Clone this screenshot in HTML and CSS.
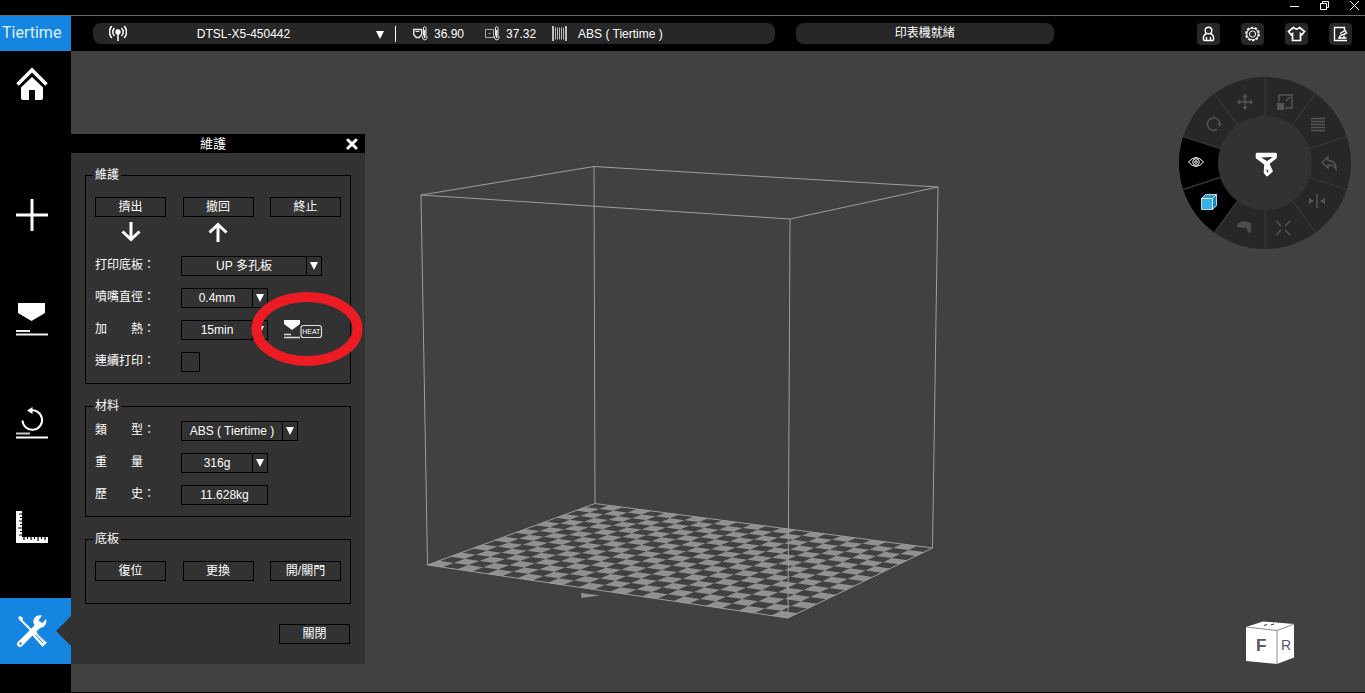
FILE: index.html
```html
<!DOCTYPE html>
<html lang="zh-Hant">
<head>
  <meta charset="UTF-8">
  <meta name="viewport" content="width=device-width,initial-scale=1.0">
  <title>Tiertime</title>
  <link rel="stylesheet" href="styles.css">
</head>
<body>
  <!-- window buttons -->
  <div class="titlebar">
    <button type="button" aria-label="最小化"><svg width="11" height="11" viewBox="0 0 11 11"><path d="M1 6.500h9"/></svg></button>
    <button type="button" aria-label="還原"><svg width="11" height="11" viewBox="0 0 11 11"><path d="M1.500 3.500h6v6h-6zM3.500 3.500v-2h6v6h-2"/></svg></button>
    <button type="button" aria-label="關閉視窗"><svg width="11" height="11" viewBox="0 0 11 11"><path d="M1 1l9 9M10 1l-9 9"/></svg></button>
  </div>

  <header class="header">
    <a class="logo" href="#">Tiertime</a>
    <div class="pill status">
      <svg class="signal" width="18" height="17" viewBox="0 0 18 17">
        <circle cx="9" cy="7" r="2.700" fill="#fff"/>
        <path d="M9 7v9M5.500 3a5.500 5.500 0 0 0 0 8M12.500 3a5.500 5.500 0 0 1 0 8M2.800 1a9 9 0 0 0 0 12M15.200 1a9 9 0 0 1 0 12" fill="none" stroke="#fff" stroke-width="1.500"/>
      </svg>
      <div class="device">
        <select aria-label="印表機"><option>DTSL-X5-450442</option></select>
      </div>
      <span class="reading">
        <svg width="15" height="15" viewBox="0 0 15 15" fill="none" stroke="#e6e6e6">
          <path d="M.700 3.500h8v5l-2.500 3h-3l-2.500-3z" stroke-width="1.400"/><path d="M2.500 5.500h4M10.500 2a1.200 1.200 0 0 1 2.500 0v7.500a2.300 2.300 0 1 1-2.500 0z"/><path d="M11.700 4v8" stroke-width="1.500"/>
        </svg>36.90
      </span>
      <span class="reading">
        <svg width="15" height="15" viewBox="0 0 15 15" fill="none" stroke="#e6e6e6">
          <path d="M.500 3.500h8v8h-8zM3.500 7.500h2" stroke="#aaa"/><path d="M10.500 2a1.200 1.200 0 0 1 2.500 0v7.500a2.300 2.300 0 1 1-2.500 0z"/><path d="M11.700 4v8" stroke-width="1.500"/>
        </svg>37.32
      </span>
      <span class="reading material">
        <svg width="15" height="15" viewBox="0 0 15 15" stroke="#fff">
          <path d="M1 0v15M14 0v15" stroke-width="1.400"/><path d="M3.500 1.500v12M5.500 1.500v12M7.500 1.500v12M9.500 1.500v12M11.500 1.500v12" stroke="#bbb"/>
        </svg>ABS ( Tiertime )
      </span>
    </div>
    <div class="pill message">印表機就緒</div>
    <div class="tools">
      <button type="button" aria-label="帳戶"><svg width="19" height="18" viewBox="0 0 19 18"><circle cx="9.500" cy="5.500" r="3.300"/><path d="M7.500 8.500C4 10 3.800 13.500 5 15.500h9c1.200-2 1-5.500-2.500-7M7.500 12v3.500M11.500 12v3.500"/></svg></button>
      <button type="button" aria-label="設定"><svg width="19" height="18" viewBox="0 0 19 18"><circle cx="9.500" cy="9" r="6.600" stroke-width="1.500" stroke-dasharray="2.600 1.550"/><circle cx="9.500" cy="9" r="5.700" stroke-width="1"/><circle cx="9.500" cy="9" r="3.100" stroke-width="1"/></svg></button>
      <button type="button" aria-label="外觀"><svg width="19" height="18" viewBox="0 0 19 18"><path d="M6.500 2.500q3 3 6 0l5 4-2.500 3.200-1.500-1V15.500h-8V8.700l-1.500 1L1.500 6.500z" stroke-width="1.700"/></svg></button>
      <button type="button" aria-label="記錄"><svg width="19" height="18" viewBox="0 0 19 18"><path d="M13.500 6V2.500h-10v13h12.500M7 13h8.500M8.500 12.500c0-3 3-2 5.500-4M9 8.500l5-3 1.500 2.500-3 1.500M13 10.500v2.500"/></svg></button>
    </div>
  </header>

  <div class="main">
    <nav class="sidebar">
      <a class="home" href="#" aria-label="首頁">
        <svg width="32" height="34" viewBox="0 0 32 34"><path d="M1.500 17.500L16 3l14.500 14.500" fill="none" stroke="#fff" stroke-width="3.600"/><path d="M5 20.500L16 10l11 10.500V31q0 2-2 2h-6V23h-6v10H7q-2 0-2-2z" fill="#fff"/></svg>
      </a>
      <a href="#" aria-label="新增">
        <svg width="32" height="32" viewBox="0 0 32 32"><path d="M0 16h32M16 0v32" stroke="#fff" stroke-width="3"/></svg>
      </a>
      <a href="#" aria-label="打印">
        <svg width="32" height="34" viewBox="0 0 32 34"><path d="M2 1h27v10L15.500 19 2 11z" fill="#fff"/><path d="M0 29h14M0 32.500h32" stroke="#eee" stroke-width="2"/></svg>
      </a>
      <a href="#" aria-label="初始化">
        <svg width="32" height="32" viewBox="0 0 32 32"><path d="M6.500 13.500A9.800 9.800 0 1 0 14 3.500" fill="none" stroke="#fff" stroke-width="2"/><path d="M11 3.500L16.500 0v7z" fill="#fff"/><path d="M0 26.500h14" stroke="#ccc" stroke-width="2"/><path d="M0 30.500h32" stroke="#fff" stroke-width="2"/></svg>
      </a>
      <a href="#" aria-label="校準">
        <svg width="32" height="32" viewBox="0 0 32 32"><path d="M0 0h6v26h26v6H0z" fill="#fff"/><path d="M6 3H3M6 6.500H4M6 10H3M6 13.500H4M6 17H2M6 20.500H4M6 24H3M8 26v3M11.500 26v2M15 26v3M18.500 26v2M22 26v4M25.500 26v2M29 26v3" stroke="#000" stroke-width="1.200"/></svg>
      </a>
      <a class="active" href="#" aria-label="維護">
        <svg width="32" height="34" viewBox="0 0 32 34">
          <path d="M4 5l17 17" stroke="#fff" stroke-width="2"/><path d="M2 3.500L4 2l3 2-.5 2L4 6.500z" fill="#fff"/>
          <path d="M16 21l3.500-4L31 28.500 26.500 33z" fill="#fff"/><path d="M19.500 21l7.500 8M21.500 19.500l7.500 8" stroke="#1485e0"/>
          <path d="M4 30L22 12" stroke="#fff" stroke-width="6" stroke-linecap="round"/>
          <path d="M26 1.500c-5-1.500-9.500 2.500-8.500 7.500.8 4 5 6 8.500 4.500 3.500-1 5-5 4-8.500L26.500 9 22.500 6.500z" fill="#fff"/><circle cx="4.500" cy="29.500" r="1.200" fill="#1485e0"/>
        </svg>
      </a>
    </nav>

    <main class="workspace">
      <form class="panel">
        <div class="panel-title">
          <h1>維護</h1>
          <button class="close" type="button" aria-label="關閉"><svg width="12" height="12" viewBox="0 0 12 12"><path d="M2 2l8 8M10 2l-8 8" stroke="#fff" stroke-width="3" stroke-linecap="round"/></svg></button>
        </div>
        <div class="panel-body">
          <fieldset class="group">
            <legend>維護</legend>
            <div class="buttons">
              <button class="btn" type="button">擠出</button>
              <button class="btn" type="button">撤回</button>
              <button class="btn" type="button">終止</button>
            </div>
            <div class="arrows">
              <svg viewBox="0 0 20 20"><path d="M10 0v17M1.500 9.500L10 17.500 18.500 9.500"/></svg>
              <svg viewBox="0 0 20 20"><path d="M10 20V3M1.500 10.500L10 2.500 18.500 10.500"/></svg>
            </div>
            <div class="row">
              <label for="plate">打印底板：</label>
              <div class="select wide"><select id="plate"><option>UP 多孔板</option></select></div>
            </div>
            <div class="row">
              <label for="nozzle">噴嘴直徑：</label>
              <div class="select"><select id="nozzle"><option>0.4mm</option></select></div>
            </div>
            <div class="row">
              <label for="heat">加　　熱：</label>
              <div class="select"><select id="heat"><option>15min</option></select></div>
              <button class="heat" type="button" aria-label="加熱">
                <svg width="39" height="20" viewBox="0 0 39 20"><path d="M0 0h16v4l-8 6-8-6z" fill="#fff"/><path d="M0 14.500h7M0 17.500h16" stroke="#ddd" stroke-width="1.500"/><rect x="17" y="5.500" width="20.500" height="12" rx="2.500" fill="none" stroke="#ddd" stroke-width="1.200"/><text x="27.300" y="14" text-anchor="middle">HEAT</text></svg>
              </button>
            </div>
            <div class="row">
              <label for="repeat">連續打印：</label>
              <input type="checkbox" id="repeat">
            </div>
          </fieldset>

          <fieldset class="group compact">
            <legend>材料</legend>
            <div class="row">
              <label for="type">類　　型：</label>
              <div class="select medium"><select id="type"><option>ABS ( Tiertime )</option></select></div>
            </div>
            <div class="row">
              <label for="weight">重　　量</label>
              <div class="select"><select id="weight"><option>316g</option></select></div>
            </div>
            <div class="row">
              <label for="history">歷　　史：</label>
              <input class="field" type="text" id="history" value="11.628kg" readonly>
            </div>
          </fieldset>

          <fieldset class="group plate">
            <legend>底板</legend>
            <div class="buttons">
              <button class="btn" type="button">復位</button>
              <button class="btn" type="button">更換</button>
              <button class="btn" type="button">開/關門</button>
            </div>
          </fieldset>

          <div class="footer">
            <button class="btn" type="button">關閉</button>
          </div>
        </div>
        <svg class="marker" viewBox="0 0 112 74"><ellipse cx="56" cy="37" rx="50.500" ry="32" fill="none" stroke="#ed1c24" stroke-width="10"/></svg>
      </form>

      <!-- build volume -->
      <svg class="scene" viewBox="400 150 560 480">
        <path id="cells" fill="#919191"/>
        <g fill="none" stroke="#9d9d9d">
          <path d="M421 195L594 166.500 938 187 790 219z"/>
          <path d="M427.500 565L595 503.500 932.500 548 788 618z"/>
          <path d="M421 195L427.500 565M594 166.500L595 503.500M938 187L932.500 548M790 219L788 618"/>
        </g>
        <path d="M581 593L600 595.500 581.500 598z" fill="#919191"/>
      </svg>

      <!-- tool wheel -->
      <div class="wheel">
        <svg class="ring" viewBox="0 0 172 172">
          <circle cx="86" cy="86" r="66" fill="#323232" stroke="#272727" stroke-width="40"/>
          <path d="M86 86L35.450 155.580A86 86 0 0 1 4.210 59.420z" fill="#000"/>
          <path id="spokes" stroke="#353535" stroke-width="1.500"/>
          <circle cx="86" cy="86" r="47" fill="#323232"/>
        </svg>
        <button class="w-main" type="button" aria-label="工具"><svg viewBox="0 0 28 28"><path d="M5 3h18.500v3.500L16 12.500l3.500 7.500-4.500 4-2-2.500.500-8.500L5 6.500z" fill="#fff" stroke="#fff" stroke-width="2.600" stroke-linejoin="round"/><path d="M9 6.500l12-.5-6 4zM14.500 18l2 2-1.500 2z" fill="#323232" stroke="none"/></svg></button>
        <button class="w-move" type="button" aria-label="移動"><svg viewBox="0 0 16 16"><path d="M8 1v14M1 8h14M6 3l2-2 2 2M6 13l2 2 2-2M3 6L1 8l2 2M13 6l2 2-2 2"/></svg></button>
        <button class="w-scale" type="button" aria-label="縮放"><svg viewBox="0 0 16 16"><path d="M2 8V1h13v13H8M9 7l4-4"/><path d="M0 9h7v7H0z" fill="#555" stroke="none"/></svg></button>
        <button class="w-layers" type="button" aria-label="層"><svg viewBox="0 0 16 16"><path d="M1 1.500h14M1 4.500h14M1 7.500h14M1 10.500h14M1 13.500h14"/></svg></button>
        <button class="w-undo" type="button" aria-label="復原"><svg viewBox="0 0 16 16"><path d="M1 7.500L7 2v3.500c5 0 8 3 8 8.500-2-3.500-4-4-8-4V13z"/></svg></button>
        <button class="w-mirror" type="button" aria-label="鏡像"><svg viewBox="0 0 16 16"><path d="M8 1v14"/><path d="M0 5l5 3-5 3zM16 5l-5 3 5 3z" fill="#555" stroke="none"/></svg></button>
        <button class="w-fit" type="button" aria-label="置中"><svg viewBox="0 0 16 16"><path d="M1 1l5 5M15 1l-5 5M1 15l5-5M15 15l-5-5"/></svg></button>
        <button class="w-support" type="button" aria-label="支撐"><svg viewBox="0 0 16 16"><path d="M1 5q5-5 14-1v9l-3 1q-1-6-4-5l-7-1z" fill="#4d4d4d" stroke="none"/></svg></button>
        <button class="w-view" type="button" aria-label="視角"><svg viewBox="0 0 16 16" stroke="#e6f7ff" stroke-width=".8"><path d="M.500 4.500h11v11H.500z" fill="#3ab0e2"/><path d="M.500 4.500L4.500.500h11l-4 4z" fill="#279ccd"/><path d="M11.500 4.500l4-4v11l-4 4z" fill="#1689bb"/></svg></button>
        <button class="w-eye" type="button" aria-label="顯示"><svg viewBox="0 0 16 16" stroke="#fff"><path d="M.500 8q7.500-9 15 0-7.500 9-15 0z"/><circle cx="8" cy="8" r="3.300"/><circle cx="8" cy="8" r="1.300"/></svg></button>
        <button class="w-rotate" type="button" aria-label="旋轉"><svg viewBox="0 0 16 16"><path d="M11 13.500A6.300 6.300 0 1 1 14 8"/><path d="M11 7.500h5l-2.500 3z" fill="#555" stroke="none"/></svg></button>
      </div>

      <!-- view cube -->
      <svg class="cube" viewBox="0 0 50 44">
        <path d="M1 6L18 .500 49 3 32 9.500z" fill="#fff"/>
        <path d="M1 6l31 3.500V43L1 40z" fill="#fff"/>
        <path d="M32 9.500L49 3v33.500L32 43z" fill="#fff"/>
        <path d="M1 6l31 3.500L49 3M32 9.500V43" fill="none" stroke="#8d8d8d"/>
        <path d="M19 4.500l3-1M26 4l3-1" stroke="#444" stroke-width="1.300"/>
        <text class="f" x="11" y="30">F</text>
        <text class="r" x="36" y="29">R</text>
      </svg>
    </main>
  </div>

  <script>
    // checkerboard of the build plate
    const cols = 23;
    const rows = 16;
    const p0 = [427.5, 565], p1 = [788, 618], p2 = [932.5, 548], p3 = [595, 503.5];

    // unit square -> plate corners
    const dx1 = p1[0] - p2[0], dy1 = p1[1] - p2[1];
    const dx2 = p3[0] - p2[0], dy2 = p3[1] - p2[1];
    const sx = p0[0] - p1[0] + p2[0] - p3[0];
    const sy = p0[1] - p1[1] + p2[1] - p3[1];
    const det = dx1 * dy2 - dx2 * dy1;
    const g = (sx * dy2 - dx2 * sy) / det;
    const h = (dx1 * sy - sx * dy1) / det;

    function project(u, v) {
      const w = g * u + h * v + 1;
      const x = ((p1[0] - p0[0] + g * p1[0]) * u + (p3[0] - p0[0] + h * p3[0]) * v + p0[0]) / w;
      const y = ((p1[1] - p0[1] + g * p1[1]) * u + (p3[1] - p0[1] + h * p3[1]) * v + p0[1]) / w;
      return x.toFixed(2) + " " + y.toFixed(2);
    }

    let cells = "";
    for (let i = 0; i < cols; i++) {
      for (let j = 0; j < rows; j++) {
        if ((i + j) % 2) continue;
        cells += `M${project(i / cols, j / rows)}L${project((i + 1) / cols, j / rows)} ${project((i + 1) / cols, (j + 1) / rows)} ${project(i / cols, (j + 1) / rows)}z`;
      }
    }
    document.getElementById("cells").setAttribute("d", cells);

    let spokes = "";
    for (let i = 0; i < 10; i++) {
      const a = i * Math.PI / 5;
      spokes += `M86 86L${86 + 86 * Math.sin(a)} ${86 - 86 * Math.cos(a)}`;
    }
    document.getElementById("spokes").setAttribute("d", spokes);
  </script>
</body>
</html>
```
FILE: styles.css
```css
* {
  box-sizing: border-box;
}
body {
  margin: 0;
  padding-bottom: 1px;
  min-height: 100vh;
  display: flex;
  flex-direction: column;
  background: #000;
  color: #fff;
  font-family: "Liberation Sans", "Noto Sans CJK TC", sans-serif;
  font-size: 12px;
  line-height: 16px;
}
button, select, input {
  margin: 0;
  padding: 0;
  border: 0;
  border-radius: 0;
  background: none;
  color: inherit;
  font: inherit;
}
svg {
  display: block;
}

/* window title bar */
.titlebar {
  height: 16px;
  display: flex;
  justify-content: flex-end;
  gap: 19px;
  padding-right: 5px;
  border-bottom: 1px solid #6a6a6a;
}
.titlebar button {
  height: 11px;
}
.titlebar path {
  fill: none;
  stroke: #fff;
}

/* header */
.header {
  height: 35px;
  display: flex;
  align-items: center;
  padding-right: 13px;
}
.logo {
  width: 71px;
  height: 35px;
  padding-left: 2px;
  background: #1485e0;
  color: #dff0ff;
  font-family: Roboto, sans-serif;
  font-size: 16px;
  line-height: 34px;
  text-decoration: none;
}
.pill {
  height: 21px;
  border-radius: 8px;
  background: #272727;
}
.status {
  flex: 665 1 0;
  margin-left: 22px;
  padding-left: 16px;
  display: flex;
  align-items: center;
  white-space: nowrap;
}
.message {
  flex: 258 1 0;
  margin-left: 21px;
  line-height: 20px;
  text-align: center;
}
.device {
  position: relative;
  width: 269px;
  padding-right: 35px;
  border-right: 1px solid #fff;
}
.device select {
  width: 100%;
  appearance: none;
  text-align: center;
  text-align-last: center;
}
.device::after, .select::after {
  content: "";
  position: absolute;
  top: 5px;
  right: 3px;
  border: 4px solid transparent;
  border-top: 8px solid #fff;
  border-bottom: 0;
  pointer-events: none;
}
.device::after {
  right: 11px;
}
.reading {
  display: flex;
  align-items: center;
  gap: 6px;
  margin-left: 17px;
}
.reading + .reading {
  margin-left: 21px;
}
.reading + .material {
  gap: 11px;
  margin-left: 16px;
}
.tools {
  display: flex;
  gap: 21px;
  margin-left: 143px;
}
.tools button {
  width: 23px;
  height: 22px;
  padding: 2px;
  border-radius: 4px;
  background: #272727;
}
.tools svg {
  fill: none;
  stroke: #fff;
  stroke-width: 1.4;
}

/* left navigation */
.main {
  flex: 1;
  display: flex;
}
.sidebar {
  width: 71px;
  display: flex;
  flex-direction: column;
  gap: 38px;
}
.sidebar a {
  position: relative;
  height: 66px;
  padding-right: 8px;
  display: flex;
  align-items: center;
  justify-content: center;
}
.sidebar .home {
  margin-bottom: 27px;
}
.sidebar .active {
  background: #1485e0;
}
.active::after {
  content: "";
  position: absolute;
  top: 18px;
  right: 0;
  border: 15px solid transparent;
  border-right-color: #323232;
  border-left: 0;
}

/* workspace */
.workspace {
  position: relative;
  flex: 1;
  display: flex;
  align-items: flex-start;
  background: #414141;
}
.scene {
  width: 560px;
  margin: 99px 0 0 35px;
}

/* maintenance panel */
.panel {
  position: relative;
  width: 294px;
  margin-top: 83px;
  background: #323232;
}
.panel-title {
  height: 19px;
  display: flex;
  align-items: center;
  padding: 0 7px 0 9px;
  background: #000;
}
.panel-title h1 {
  flex: 1;
  margin: 0;
  font-size: 13px;
  font-weight: normal;
  text-align: center;
}
.panel-body {
  padding: 14px 14px 20px;
}
.group {
  margin: 0 0 14px;
  padding: 14px 9px 11px;
  min-width: 0;
  border: 1px solid #000;
}
.group legend {
  margin-left: -2px;
  padding: 0 2px;
}
.compact {
  padding-top: 7px;
}
.plate {
  padding-bottom: 22px;
}
.buttons {
  display: flex;
  justify-content: space-between;
}
.btn {
  width: 71px;
  height: 20px;
  border: 1px solid #000;
}
.arrows {
  display: flex;
  gap: 67px;
  padding: 5px 26px 14px;
}
.arrows svg {
  width: 20px;
  height: 20px;
  fill: none;
  stroke: #fff;
  stroke-width: 3;
}
.row {
  display: flex;
  height: 20px;
}
.row + .row {
  margin-top: 12px;
}
.row label {
  width: 86px;
  line-height: 18px;
  white-space: nowrap;
}
.select {
  position: relative;
  width: 87px;
  border: 1px solid #000;
}
.wide {
  width: 141px;
}
.medium {
  width: 117px;
}
.select select {
  width: 100%;
  height: 18px;
  padding-right: 15px;
  appearance: none;
  background: linear-gradient(#000, #000) no-repeat right 14px top / 1px 100%;
  text-align: center;
  text-align-last: center;
}
.field {
  width: 87px;
  border: 1px solid #000;
  text-align: center;
}
.row input[type="checkbox"] {
  width: 19px;
  height: 20px;
  appearance: none;
  border: 1px solid #000;
}
.heat {
  margin-left: 16px;
}
.heat text {
  fill: #fff;
  font-family: "Liberation Sans", sans-serif;
  font-size: 7px;
}
.footer {
  display: flex;
  justify-content: flex-end;
  padding: 6px 1px 0 0;
}
.marker {
  position: absolute;
  top: 158px;
  left: 180px;
  width: 112px;
  pointer-events: none;
}

/* tool wheel */
.wheel {
  position: absolute;
  top: 26px;
  right: 14px;
  width: 172px;
  height: 172px;
}
.wheel button {
  position: absolute;
  width: 16px;
  height: 16px;
}
.wheel button svg {
  width: 100%;
  fill: none;
}
.wheel button svg:not([stroke]) {
  stroke: #555;
  stroke-width: 1.5;
}
.wheel .w-main { top: 74px; left: 73px; width: 28px; height: 28px; }
.w-move { top: 17px; left: 58px; }
.w-scale { top: 17px; left: 98px; }
.w-layers { top: 40px; left: 131px; }
.w-undo { top: 78px; left: 142px; }
.w-mirror { top: 116px; left: 130px; }
.w-fit { top: 143px; left: 96px; }
.w-support { top: 142px; left: 57px; }
.w-view { top: 117px; left: 22px; }
.w-eye { top: 77px; left: 9px; }
.w-rotate { top: 39px; left: 27px; }

/* view cube */
.cube {
  position: absolute;
  right: 70px;
  bottom: 27px;
  width: 50px;
}
.cube text {
  fill: #555a62;
}
.f {
  font-size: 17px;
  font-weight: bold;
}
.r {
  font-size: 14px;
}
```
